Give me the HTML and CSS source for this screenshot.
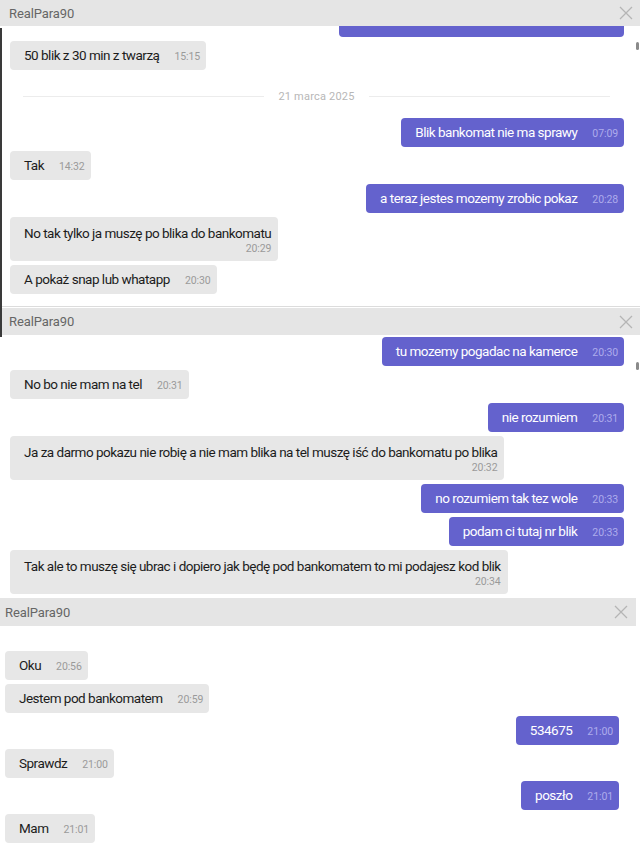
FILE: index.html
```html
<!DOCTYPE html>
<html lang="pl">
<head>
<meta charset="utf-8">
<title>RealPara90</title>
<link rel="stylesheet" href="styles.css">
</head>
<body>
<div class="page">
  <div class="edge-line"></div>

  <section class="panel panel-1">
    <header class="chat-head">
      <span class="chat-name">RealPara90</span>
      <svg class="close" viewBox="0 0 14 14" width="14" height="14"><path d="M1 1L13 13M13 1L1 13" stroke="#b5b5b5" stroke-width="1.3" fill="none"/></svg>
    </header>
    <div class="messages">
      <div class="thumb"></div>
      <div class="msg out cut"><span class="txt">&nbsp;</span></div>
      <div class="msg in"><span class="txt">50 blik z 30 min z twarzą</span><span class="time">15:15</span></div>
      <div class="date-sep"><span class="line"></span><span class="date">21 marca 2025</span><span class="line"></span></div>
      <div class="msg out"><span class="txt">Blik bankomat nie ma sprawy</span><span class="time">07:09</span></div>
      <div class="msg in"><span class="txt">Tak</span><span class="time">14:32</span></div>
      <div class="msg out"><span class="txt">a teraz jestes mozemy zrobic pokaz</span><span class="time">20:28</span></div>
      <div class="msg in wrap"><span class="txt">No tak tylko ja muszę po blika do bankomatu</span><span class="time">20:29</span></div>
      <div class="msg in"><span class="txt">A pokaż snap lub whatapp</span><span class="time">20:30</span></div>
    </div>
  </section>

  <section class="panel panel-2">
    <header class="chat-head">
      <span class="chat-name">RealPara90</span>
      <svg class="close" viewBox="0 0 14 14" width="14" height="14"><path d="M1 1L13 13M13 1L1 13" stroke="#b5b5b5" stroke-width="1.3" fill="none"/></svg>
    </header>
    <div class="messages">
      <div class="thumb"></div>
      <div class="msg out"><span class="txt">tu mozemy pogadac na kamerce</span><span class="time">20:30</span></div>
      <div class="msg in"><span class="txt">No bo nie mam na tel</span><span class="time">20:31</span></div>
      <div class="msg out"><span class="txt">nie rozumiem</span><span class="time">20:31</span></div>
      <div class="msg in wrap"><span class="txt">Ja za darmo pokazu nie robię a nie mam blika na tel muszę iść do bankomatu po blika</span><span class="time">20:32</span></div>
      <div class="msg out"><span class="txt">no rozumiem tak tez wole</span><span class="time">20:33</span></div>
      <div class="msg out"><span class="txt">podam ci tutaj nr blik</span><span class="time">20:33</span></div>
      <div class="msg in wrap"><span class="txt">Tak ale to muszę się ubrac i dopiero jak będę pod bankomatem to mi podajesz kod blik</span><span class="time">20:34</span></div>
    </div>
  </section>

  <section class="panel panel-3">
    <header class="chat-head">
      <span class="chat-name">RealPara90</span>
      <svg class="close" viewBox="0 0 14 14" width="14" height="14"><path d="M1 1L13 13M13 1L1 13" stroke="#b5b5b5" stroke-width="1.3" fill="none"/></svg>
    </header>
    <div class="messages">
      <div class="msg in"><span class="txt">Oku</span><span class="time">20:56</span></div>
      <div class="msg in"><span class="txt">Jestem pod bankomatem</span><span class="time">20:59</span></div>
      <div class="msg out"><span class="txt">534675</span><span class="time">21:00</span></div>
      <div class="msg in"><span class="txt">Sprawdz</span><span class="time">21:00</span></div>
      <div class="msg out"><span class="txt">poszło</span><span class="time">21:01</span></div>
      <div class="msg in"><span class="txt">Mam</span><span class="time">21:01</span></div>
    </div>
  </section>
</div>
</body>
</html>
```
FILE: styles.css
```css
* { box-sizing: border-box; }
html, body { margin: 0; padding: 0; background: #fff; }
body {
  font-family: Roboto, "Noto Sans", "Liberation Sans", sans-serif;
  color: #1c1c1c;
  width: 640px;
  height: 844px;
  overflow: hidden;
}
.page { position: relative; width: 640px; height: 844px; display: flex; flex-direction: column; }
.edge-line {
  position: absolute; left: 0; top: 28px; width: 2px; height: 309px; background: #3a3a3a; z-index: 2;
}
.panel { display: flex; flex-direction: column; overflow: hidden; flex: none; }
.panel-1 { height: 307px; border-bottom: 1px solid #dcdcdc; }
.panel-2 { height: 291px; padding-top: 1px; }
.panel-3 { height: 246px; width: 636px; }

.chat-head {
  height: 26px; flex: none;
  background: #e5e5e5;
  display: flex; align-items: center; justify-content: space-between;
  padding: 0 7px 0 9px;
}
.panel-2 .chat-head { height: 27px; padding-right: 7px; }
.panel-3 .chat-head { height: 28px; padding-left: 5px; padding-right: 8px; }
.chat-name { font-size: 13px; color: #666; letter-spacing: -0.1px; }
.close { display: block; }

.messages {
  position: relative;
  flex: 1;
  display: flex; flex-direction: column; align-items: flex-start;
  gap: 4px;
  padding: 0 16px 0 10px;
}
.panel-2 .messages { padding-top: 2px; }
.panel-3 .messages { padding: 25px 17px 0 5px; gap: 3.6px; }

.thumb {
  position: absolute; right: 1px; top: 16px; width: 3px; height: 8px; border-radius: 2px; background: #8a8a8a;
}
.panel-2 .thumb { top: 27px; }

.msg {
  display: flex; align-items: baseline;
  height: 29px;
  padding: 0 6px 0 14px;
  border-radius: 4px;
  background: #e7e7e7;
  font-size: 13.5px;
  letter-spacing: -0.5px;
  line-height: 29px;
  flex: none;
  overflow: hidden;
}
.msg .time {
  font-size: 10.5px; color: #9a9a9a; margin-left: 15px; letter-spacing: -0.1px;
}
.msg.out { align-self: flex-end; background: #6462cd; color: #fff; }
.msg.out .time { color: #aeacec; margin-left: 15px; }
.msg.wrap {
  height: 44px;
  flex-direction: column; align-items: flex-end;
  padding: 7px 7px 5px 14px;
  line-height: 18px;
}
.msg.wrap .txt { align-self: flex-start; }
.msg.wrap .time { margin-left: 0; line-height: 14px; }
.msg.cut { width: 285px; height: 11px; border-radius: 0 0 4px 4px; }

.date-sep {
  align-self: stretch;
  display: flex; align-items: center; gap: 14px;
  height: 40px;
  padding-top: 4px;
  margin: 0 14px 0 13px;
}
.date-sep .line { flex: 1; height: 1px; background: #ececec; }
.date-sep .date { font-size: 11px; color: #b7b7b7; letter-spacing: 0.2px; }
```
